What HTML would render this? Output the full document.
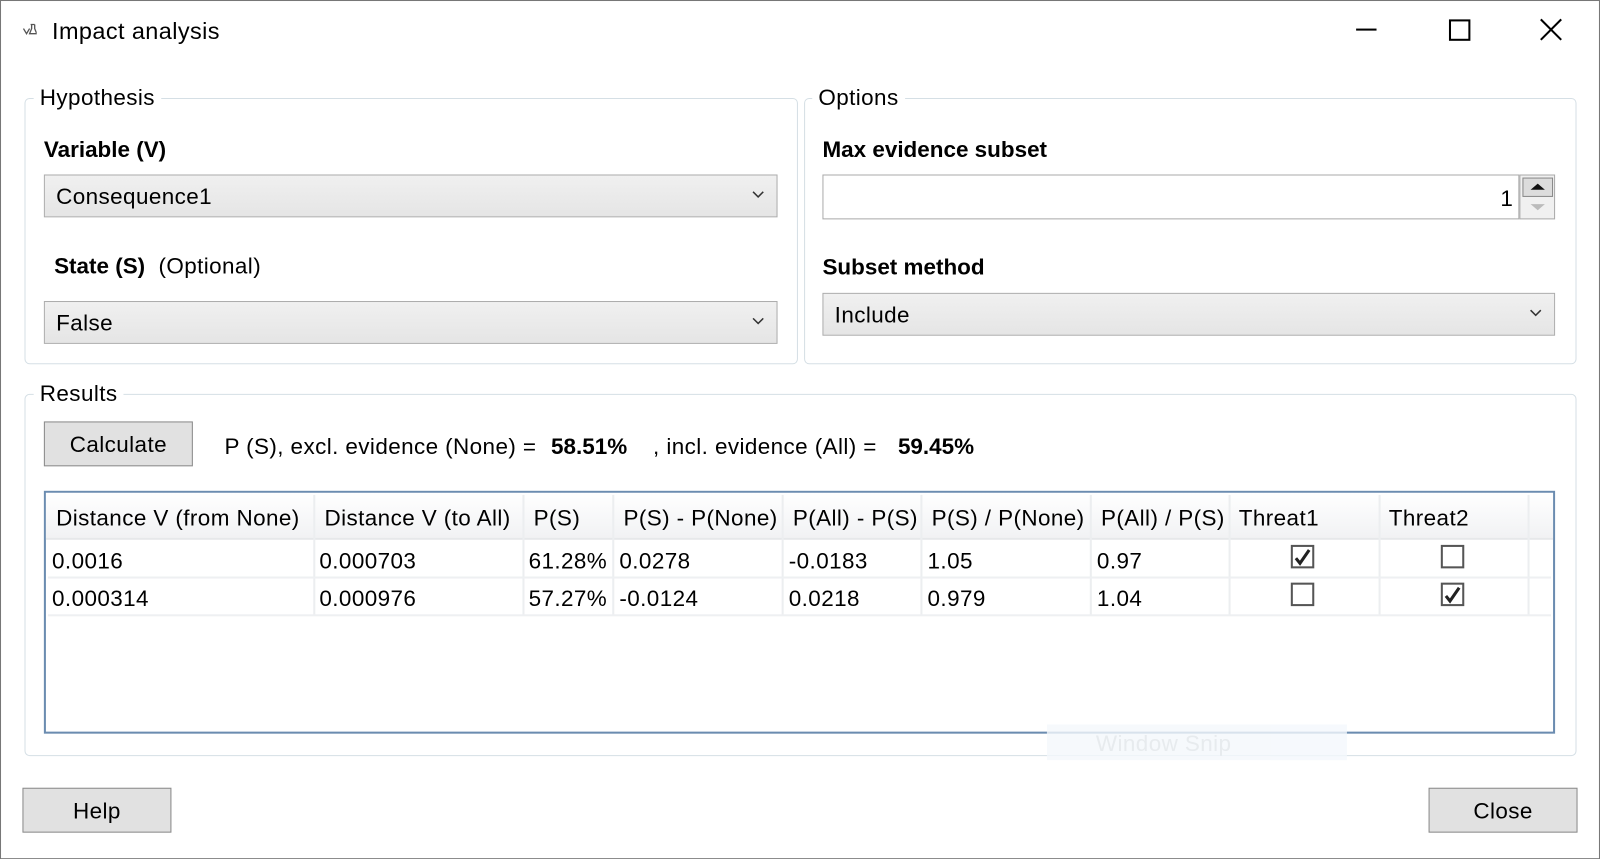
<!DOCTYPE html>
<html><head><meta charset="utf-8"><style>
html,body{margin:0;padding:0;width:1600px;height:859px;overflow:hidden;background:#fff}
#w{position:absolute;left:0;top:0;width:1568px;height:842px;transform:scale(1.0204);transform-origin:0 0;font-family:"Liberation Sans",sans-serif;font-size:22px;letter-spacing:0.4px;color:#000}
.a{position:absolute;white-space:nowrap}
.grp{position:absolute;border:1.5px solid #d5dfe5;border-radius:5px}
.lg{position:absolute;background:#fff;padding:0 6px;font-size:22px;line-height:26px}
.b{font-weight:bold;letter-spacing:0}
.cb{position:absolute;border:1px solid #acacac;background:linear-gradient(#f0f0f0,#e5e5e5);box-sizing:border-box}
.cb span{position:absolute;left:11px;top:8px}
.cb svg{position:absolute;right:12px;top:15px}
.btn{position:absolute;border:1.5px solid #8a8a8a;background:#e1e1e1;box-sizing:border-box;text-align:center;line-height:43px}
.vl{position:absolute;top:2px;width:2px;background:#eceef0}
.hl{position:absolute;left:2px;right:2px;height:2px;background:#eef0f2}
.chk{position:absolute;width:23px;height:23px;border:2px solid #555;box-sizing:border-box;background:#fff}
</style></head><body><div id="w">
<div class="a" style="left:0;top:0;width:1566px;height:840px;border:1px solid #777;box-sizing:content-box"></div>
<svg class="a" style="left:22px;top:22px" width="14" height="14" viewBox="0 0 14 14"><path d="M1 6l3 5 3-5M8 2h4M9 2v4l-2 5h7l-2-5V2" fill="none" stroke="#555" stroke-width="1.3"/></svg>
<div class="a" style="left:51px;top:17px;font-size:23px">Impact analysis</div>
<div class="a" style="left:1329px;top:28px;width:20px;height:2px;background:#000"></div>
<div class="a" style="left:1420px;top:19px;width:17px;height:17px;border:2px solid #000"></div>
<svg class="a" style="left:1509px;top:18px" width="22" height="22"><path d="M1 1L21 21M21 1L1 21" stroke="#000" stroke-width="2"/></svg>

<div class="grp" style="left:24px;top:96px;width:756px;height:259px"></div>
<div class="lg" style="left:33px;top:83px">Hypothesis</div>
<div class="a b" style="left:43px;top:134px;font-size:22px">Variable (V)</div>
<div class="cb" style="left:43px;top:171px;width:719px;height:42px"><span>Consequence1</span><svg width="12" height="8"><path d="M1 1l5 5 5-5" fill="none" stroke="#333" stroke-width="1.5"/></svg></div>
<div class="a" style="left:53px;top:248px;font-size:22px"><b class="b">State (S)</b>&nbsp; (Optional)</div>
<div class="cb" style="left:43px;top:295px;width:719px;height:42px"><span>False</span><svg width="12" height="8"><path d="M1 1l5 5 5-5" fill="none" stroke="#333" stroke-width="1.5"/></svg></div>

<div class="grp" style="left:788px;top:96px;width:755px;height:259px"></div>
<div class="lg" style="left:796px;top:83px">Options</div>
<div class="a b" style="left:806px;top:134px;font-size:22px">Max evidence subset</div>
<div class="a" style="left:806px;top:171px;width:683px;height:44px;border:1.5px solid #aaa;box-sizing:border-box"><span class="a" style="right:5px;top:10px">1</span></div>
<div class="a" style="left:1489px;top:171px;width:35px;height:44px;border:1.5px solid #aaa;box-sizing:border-box;background:#f0f0f0">
<div class="a" style="left:2px;top:2px;width:28px;height:17px;border:1px solid #888;background:#dcdcdc"></div>
<svg class="a" style="left:8px;top:6px" width="18" height="10"><path d="M2 8l7-6 7 6z" fill="#111"/></svg>
<svg class="a" style="left:8px;top:26px" width="18" height="10"><path d="M2 2l7 6 7-6z" fill="#bbb"/></svg></div>
<div class="a b" style="left:806px;top:249px;font-size:22px">Subset method</div>
<div class="cb" style="left:806px;top:287px;width:718px;height:42px"><span>Include</span><svg width="12" height="8"><path d="M1 1l5 5 5-5" fill="none" stroke="#333" stroke-width="1.5"/></svg></div>

<div class="grp" style="left:24px;top:386px;width:1519px;height:353px"></div>
<div class="lg" style="left:33px;top:373px">Results</div>
<div class="btn" style="left:43px;top:413px;width:146px;height:44px">Calculate</div>
<div class="a" style="left:220px;top:425px">P (S), excl. evidence (None) =</div>
<div class="a b" style="left:540px;top:425px">58.51%</div>
<div class="a" style="left:640px;top:425px">, incl. evidence (All) =</div>
<div class="a b" style="left:880px;top:425px">59.45%</div>

<div class="a" style="left:43px;top:481px;width:1481px;height:238px;border:2px solid #6b8cb0;box-sizing:border-box">
<div class="a" style="left:0;top:0;right:0;height:44px;background:linear-gradient(#fff,#f1f2f4);border-bottom:2px solid #e6e8ea"></div>
<div class="vl" style="left:262px;height:118px"></div><div class="vl" style="left:467px;height:118px"></div><div class="vl" style="left:555px;height:118px"></div><div class="vl" style="left:721px;height:118px"></div><div class="vl" style="left:857px;height:118px"></div><div class="vl" style="left:1023px;height:118px"></div><div class="vl" style="left:1159px;height:118px"></div><div class="vl" style="left:1306px;height:118px"></div><div class="vl" style="left:1452px;height:118px"></div>
<div class="hl" style="top:82px"></div><div class="hl" style="top:119px"></div>
</div>
<div class="a" style="left:55px;top:495px">Distance V (from None)</div>
<div class="a" style="left:318px;top:495px">Distance V (to All)</div>
<div class="a" style="left:523px;top:495px">P(S)</div>
<div class="a" style="left:611px;top:495px">P(S) - P(None)</div>
<div class="a" style="left:777px;top:495px">P(All) - P(S)</div>
<div class="a" style="left:913px;top:495px">P(S) / P(None)</div>
<div class="a" style="left:1079px;top:495px">P(All) / P(S)</div>
<div class="a" style="left:1214px;top:495px">Threat1</div>
<div class="a" style="left:1361px;top:495px">Threat2</div>
<div class="a" style="left:51px;top:537px">0.0016</div><div class="a" style="left:313px;top:537px">0.000703</div><div class="a" style="left:518px;top:537px">61.28%</div><div class="a" style="left:607px;top:537px">0.0278</div><div class="a" style="left:773px;top:537px">-0.0183</div><div class="a" style="left:909px;top:537px">1.05</div><div class="a" style="left:1075px;top:537px">0.97</div>
<div class="a" style="left:51px;top:574px">0.000314</div><div class="a" style="left:313px;top:574px">0.000976</div><div class="a" style="left:518px;top:574px">57.27%</div><div class="a" style="left:607px;top:574px">-0.0124</div><div class="a" style="left:773px;top:574px">0.0218</div><div class="a" style="left:909px;top:574px">0.979</div><div class="a" style="left:1075px;top:574px">1.04</div>
<div class="chk" style="left:1265px;top:534px"><svg width="19" height="19"><path d="M3 10l4 5 9-13" fill="none" stroke="#222" stroke-width="3"/></svg></div>
<div class="chk" style="left:1412px;top:534px"></div>
<div class="chk" style="left:1265px;top:571px"></div>
<div class="chk" style="left:1412px;top:571px"><svg width="19" height="19"><path d="M3 10l4 5 9-13" fill="none" stroke="#222" stroke-width="3"/></svg></div>
<div class="a" style="left:1026px;top:710px;width:294px;height:35px;background:#f4f8fc;opacity:.8;color:#e2e6ea;line-height:38px;text-indent:48px">Window Snip</div>

<div class="btn" style="left:22px;top:772px;width:146px;height:44px">Help</div>
<div class="btn" style="left:1400px;top:772px;width:146px;height:44px">Close</div>
</div></body></html>
